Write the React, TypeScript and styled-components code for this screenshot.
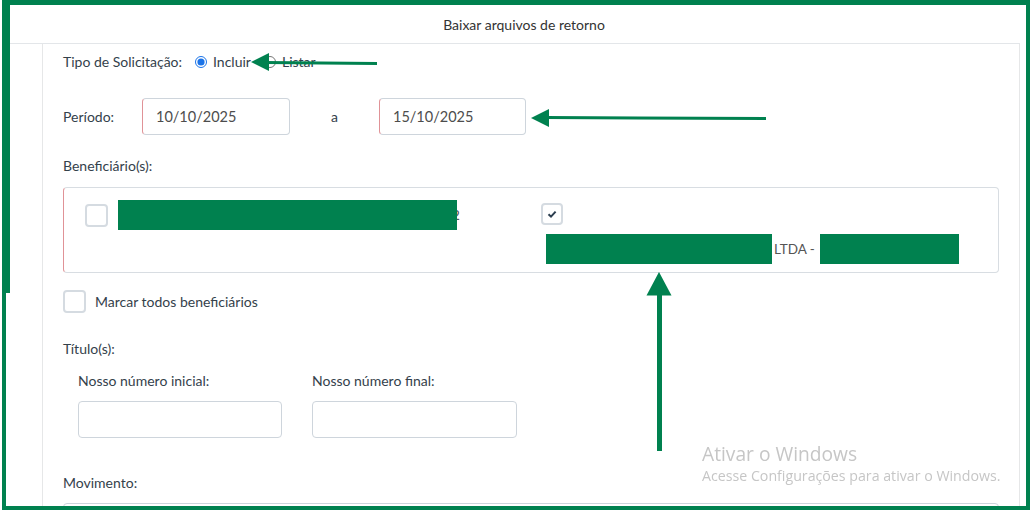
import React from "react";
import styled, { createGlobalStyle } from "styled-components";

const green = "#00814f";

const GlobalStyle = createGlobalStyle`
  html, body {
    margin: 0;
    padding: 0;
    background: #fff;
  }
  body {
    font-family: Lato, "Noto Sans", sans-serif;
    color: #34414b;
    overflow: hidden;
  }
`;

const Frame = styled.div`
  position: relative;
  box-sizing: border-box;
  width: 1028px;
  height: 510px;
  margin-left: 2px;
  border: 4px solid ${green};
  border-top-width: 5px;
  background: #fff;
  overflow: hidden;
  display: flex;
  flex-direction: column;
`;

const EdgeStrip = styled.div`
  position: absolute;
  left: 0;
  top: 0;
  width: 4px;
  height: 288px;
  background: ${green};
`;

const Header = styled.div`
  flex: none;
  height: 38px;
  margin: 0 6px 0 4px;
  border-bottom: 1px solid #e3e6e9;
  display: flex;
  align-items: center;
  justify-content: center;
  padding-left: 18px;
  font-size: 14px;
  color: #333;
`;

const Body = styled.div`
  flex: 1;
  display: flex;
  padding: 0 6px 0 36px;
  overflow: hidden;
`;

const Panel = styled.div`
  flex: 1;
  border-left: 1px solid #e6e7e8;
  border-right: 1px solid #e6e7e8;
  padding: 8px 20px 0 20px;
  display: flex;
  flex-direction: column;

  & > * {
    flex-shrink: 0;
  }
`;

const Row = styled.div<{ $top?: number }>`
  display: flex;
  align-items: center;
  margin-top: ${(p) => p.$top ?? 0}px;
`;

const Label = styled.span<{ $width?: number }>`
  font-size: 14px;
  line-height: 20px;
  white-space: nowrap;
  ${(p) => (p.$width ? `width: ${p.$width}px; flex: none;` : "")}
`;

const RadioGroup = styled.label`
  display: flex;
  align-items: center;
  gap: 6px;
  margin-left: 13px;
  font-size: 14px;
  line-height: 20px;
`;

const Radio = styled.input`
  width: 12px;
  height: 12px;
  margin: 0;
  accent-color: #1a73e8;
`;

const Field = styled.div<{ $width: number; $invalid?: boolean }>`
  box-sizing: border-box;
  width: ${(p) => p.$width}px;
  height: 37px;
  border: 1px solid #ced5dc;
  border-left-color: ${(p) => (p.$invalid ? "#e09297" : "#ced5dc")};
  border-radius: 4px;
  padding-left: 13px;
  display: flex;
  align-items: center;
  font-size: 14.5px;
  color: #4d4d4d;
  background: #fff;
`;

const Between = styled.span`
  width: 89px;
  text-align: center;
  font-size: 14px;
`;

const SectionLabel = styled.div<{ $top: number }>`
  margin-top: ${(p) => p.$top}px;
  font-size: 14px;
  line-height: 20px;
`;

const BeneficiaryBox = styled.div`
  margin-top: 11px;
  box-sizing: border-box;
  height: 86px;
  border: 1px solid #d8dde2;
  border-left-color: #e09297;
  border-radius: 4px;
  padding: 12px 20px 0 21px;
  display: grid;
  grid-template-columns: 456px 1fr;
  align-items: start;
`;

const Beneficiary = styled.div<{ $stacked?: boolean }>`
  display: flex;
  flex-direction: ${(p) => (p.$stacked ? "column" : "row")};
  align-items: ${(p) => (p.$stacked ? "flex-start" : "center")};
  gap: ${(p) => (p.$stacked ? 9 : 10)}px;
  padding-top: ${(p) => (p.$stacked ? 3 : 0)}px;
`;

const Check = styled.span<{ $size?: number }>`
  box-sizing: border-box;
  flex: none;
  width: ${(p) => p.$size ?? 23}px;
  height: ${(p) => p.$size ?? 23}px;
  border: 2px solid #d5dbe1;
  border-radius: 4px;
  background: #fff;
  display: flex;
  align-items: center;
  justify-content: center;
`;

const BeneficiaryName = styled.span<{ $indent?: number }>`
  display: flex;
  align-items: center;
  height: 30px;
  margin-left: ${(p) => p.$indent ?? 0}px;
  font-size: 13.5px;
  color: #555;
  white-space: nowrap;
`;

const Redacted = styled.span<{ $width: number }>`
  position: relative;
  display: inline-block;
  width: ${(p) => p.$width}px;
  height: 30px;
  background: ${green};
`;

const Tail = styled.span<{ $pull?: number; $gap?: number }>`
  margin-left: ${(p) => -(p.$pull ?? 0) + (p.$gap ?? 0)}px;
  margin-right: ${(p) => (p.$gap ?? 0) + 3}px;
`;

const CheckRow = styled.label`
  margin-top: 17px;
  display: flex;
  align-items: center;
  gap: 9px;
  font-size: 14px;
`;

const TitleFields = styled.div`
  margin-top: 12px;
  margin-left: 15px;
  display: grid;
  grid-template-columns: 204px 205px;
  column-gap: 30px;
  row-gap: 10px;
`;

const Overlay = styled.svg`
  position: fixed;
  left: 0;
  top: 0;
  width: 1031px;
  height: 512px;
  pointer-events: none;
`;

const Watermark = styled.div`
  position: fixed;
  left: 702px;
  top: 440px;
  font-family: "Open Sans", "Noto Sans", sans-serif;
  color: #c6c6c6;
  pointer-events: none;
`;

const WatermarkTitle = styled.div`
  font-size: 19.2px;
  line-height: 27px;
`;

const WatermarkText = styled.div`
  font-size: 14.2px;
  line-height: 18px;
`;

function Arrows() {
  return (
    <Overlay viewBox="0 0 1031 512">
      <g fill={green} stroke={green}>
        <line x1="377" y1="63.5" x2="265" y2="62.5" strokeWidth="3" />
        <polygon points="251,62 269,53 269,71" stroke="none" />
        <line x1="766" y1="118.5" x2="545" y2="117.5" strokeWidth="3" />
        <polygon points="531,118 549,109 549,127" stroke="none" />
        <line x1="659.5" y1="451" x2="659.5" y2="290" strokeWidth="5" />
        <polygon points="659,272 646.5,295.5 671.5,295.5" stroke="none" />
      </g>
    </Overlay>
  );
}

export default function App() {
  return (
    <>
      <GlobalStyle />
      <Frame>
        <EdgeStrip />
        <Header>Baixar arquivos de retorno</Header>
        <Body>
          <Panel>
            <Row>
              <Label>Tipo de Solicitação:</Label>
              <RadioGroup>
                <Radio type="radio" name="tipo" defaultChecked />
                Incluir
              </RadioGroup>
              <RadioGroup>
                <Radio type="radio" name="tipo" />
                Listar
              </RadioGroup>
            </Row>

            <Row $top={26}>
              <Label $width={79}>Período:</Label>
              <Field $width={148} $invalid>
                10/10/2025
              </Field>
              <Between>a</Between>
              <Field $width={147} $invalid>
                15/10/2025
              </Field>
            </Row>

            <SectionLabel $top={21}>Beneficiário(s):</SectionLabel>
            <BeneficiaryBox>
              <Beneficiary>
                <Check />
                <BeneficiaryName>
                  <Redacted $width={339} />
                  <Tail $pull={5}>2</Tail>
                </BeneficiaryName>
              </Beneficiary>
              <Beneficiary $stacked>
                <Check $size={22}>
                  <svg width="10" height="10" viewBox="0 0 10 10">
                    <path
                      d="M1.5 5.2 L4 7.6 L8.6 2.6"
                      fill="none"
                      stroke="#2c3e50"
                      strokeWidth="2"
                    />
                  </svg>
                </Check>
                <BeneficiaryName $indent={5}>
                  <Redacted $width={226} />
                  <Tail $gap={2}>LTDA -</Tail>
                  <Redacted $width={139} />
                </BeneficiaryName>
              </Beneficiary>
            </BeneficiaryBox>

            <CheckRow>
              <Check />
              Marcar todos beneficiários
            </CheckRow>

            <SectionLabel $top={26}>Título(s):</SectionLabel>
            <TitleFields>
              <Label>Nosso número inicial:</Label>
              <Label>Nosso número final:</Label>
              <Field $width={204} />
              <Field $width={205} />
            </TitleFields>

            <SectionLabel $top={35}>Movimento:</SectionLabel>
            <Row $top={10}>
              <Field $width={936} />
            </Row>
          </Panel>
        </Body>
      </Frame>
      <Arrows />
      <Watermark>
        <WatermarkTitle>Ativar o Windows</WatermarkTitle>
        <WatermarkText>Acesse Configurações para ativar o Windows.</WatermarkText>
      </Watermark>
    </>
  );
}
